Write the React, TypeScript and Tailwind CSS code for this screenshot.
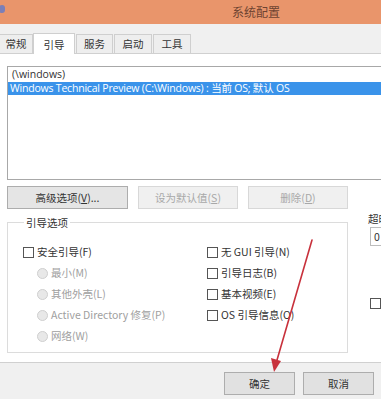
import React from "react";

const font = { fontFamily: '"Noto Sans CJK SC", "Noto Sans", sans-serif' };
const latin = { fontFamily: '"Open Sans", "Noto Sans CJK SC", sans-serif' };

function Check({ label, disabled }: { label: string; disabled?: boolean }) {
  return (
    <div className="flex items-center h-[21px]">
      <span className="w-[11px] h-[11px] border border-[#555] bg-white shrink-0" />
      <span className={"ml-[3px] text-[10.5px] leading-none whitespace-nowrap " + (disabled ? "text-[#a0a0a0]" : "text-[#333]")}>{label}</span>
    </div>
  );
}

function Radio({ label }: { label: string }) {
  return (
    <div className="flex items-center h-[21px]">
      <span className="w-[11px] h-[11px] rounded-full border border-[#cfcfcf] bg-[#e8e8e8] shrink-0" />
      <span className="ml-[3px] text-[10.5px] leading-none text-[#a0a0a0] whitespace-nowrap">{label}</span>
    </div>
  );
}

export default function App() {
  return (
    <div className="relative w-[381px] h-[399px] overflow-hidden bg-[#f0f0f0] flex flex-col" style={font}>
      {/* Title bar */}
      <div className="h-[24px] bg-[#e9956b] flex items-center shrink-0">
        <span className="w-[6px] h-[8px] ml-[-1px] mt-[-6px] rounded-sm bg-[#7b7fb8]" />
        <span className="ml-[227px] text-[12px] text-[#6e4331]">系统配置</span>
      </div>
      {/* Tabs */}
      <div className="h-[29px] flex items-end shrink-0 bg-[#f0f0f0]">
        <div className="h-[19px] w-[34px] ml-[-1px] border border-b-0 border-[#cfcfcf] bg-[#eeeeee] flex items-center justify-center text-[10.5px] text-[#333]">常规</div>
        <div className="h-[21px] w-[42px] border border-b-0 border-[#cfcfcf] bg-white flex items-start pt-[3px] justify-center text-[10.5px] text-[#333] relative top-[1px]">引导</div>
        <div className="h-[19px] w-[37px] ml-[1px] border border-b-0 border-[#cfcfcf] bg-[#eeeeee] flex items-center justify-center text-[10.5px] text-[#333]">服务</div>
        <div className="h-[19px] w-[38px] ml-[1px] border border-b-0 border-[#cfcfcf] bg-[#eeeeee] flex items-center justify-center text-[10.5px] text-[#333]">启动</div>
        <div className="h-[19px] w-[38px] ml-[1px] border border-b-0 border-[#cfcfcf] bg-[#eeeeee] flex items-center justify-center text-[10.5px] text-[#333]">工具</div>
      </div>
      {/* Panel */}
      <div className="h-[310px] bg-white border-t border-b border-[#d0d0d0] pl-[7px] pt-[12px] shrink-0 overflow-hidden">
        <div className="w-[390px] h-[114px] border border-[#a8a8a8] bg-white">
          <div className="h-[15px] pl-[4px] text-[10.5px] leading-[15px] text-[#333]" style={latin}>(\windows)</div>
          <div className="h-[13px] pl-[2px] bg-[#3a93ea] text-[10.5px] leading-[13px] text-white whitespace-nowrap tracking-[-0.2px]" style={latin}>Windows Technical Preview (C:\Windows) : 当前 OS; 默认 OS</div>
        </div>
        <div className="flex mt-[6px] h-[23px] gap-[10px]">
          <div className="w-[121px] shrink-0 border border-[#adadad] bg-[#e5e5e5] flex items-center justify-center text-[10.5px] text-[#333]">高级选项(<u>V</u>)...</div>
          <div className="w-[100px] shrink-0 border border-[#d8d8d8] bg-[#f0f0f0] flex items-center justify-center text-[10.5px] text-[#a8a8a8]">设为默认值(<u>S</u>)</div>
          <div className="w-[100px] shrink-0 border border-[#d8d8d8] bg-[#f0f0f0] flex items-center justify-center text-[10.5px] text-[#a8a8a8]">删除(<u>D</u>)</div>
        </div>
        <div className="flex mt-[6px]">
          <fieldset className="w-[341px] h-[138px] shrink-0 border border-[#dcdcdc] px-[15px] pt-[11px] flex">
            <legend className="ml-[1px] px-[2px] text-[10.5px] text-[#333]">引导选项</legend>
            <div className="w-[184px] flex flex-col">
              <Check label="安全引导(F)" />
              <div className="pl-[14px] flex flex-col">
                <Radio label="最小(M)" />
                <Radio label="其他外壳(L)" />
                <Radio label="Active Directory 修复(P)" />
                <Radio label="网络(W)" />
              </div>
            </div>
            <div className="flex flex-col">
              <Check label="无 GUI 引导(N)" />
              <Check label="引导日志(B)" />
              <Check label="基本视频(E)" />
              <Check label="OS 引导信息(O)" />
            </div>
          </fieldset>
          <div className="ml-[20px] flex flex-col shrink-0">
            <div className="text-[10.5px] text-[#333] leading-[14px] mt-[-3px] whitespace-nowrap">超时</div>
            <div className="mt-[1px] ml-[2px] w-[30px] h-[19px] border border-[#bdbdbd] bg-white text-[10.5px] text-[#333] pl-[3px] leading-[17px]">0</div>
            <span className="mt-[52px] ml-[2px] w-[11px] h-[11px] border border-[#555] bg-white" />
          </div>
        </div>
      </div>
      {/* Bottom buttons */}
      <div className="flex mt-[9px] ml-[224px] gap-[8px]">
        <div className="w-[71px] h-[23px] shrink-0 border border-[#adadad] bg-[#e1e1e1] flex items-center justify-center text-[10.5px] text-[#333]">确定</div>
        <div className="w-[71px] h-[23px] shrink-0 border border-[#adadad] bg-[#e1e1e1] flex items-center justify-center text-[10.5px] text-[#333]">取消</div>
        <div className="w-[71px] h-[23px] shrink-0 border border-[#adadad] bg-[#e1e1e1]" />
      </div>
      {/* Red arrow annotation */}
      <svg className="absolute left-0 top-0 pointer-events-none" width="381" height="399" viewBox="0 0 381 399">
        <line x1="312" y1="240" x2="277" y2="360" stroke="#c8313c" strokeWidth="1.6" strokeLinecap="round" />
        <polygon points="274,372 271,358 281,361" fill="#c8313c" />
      </svg>
    </div>
  );
}
